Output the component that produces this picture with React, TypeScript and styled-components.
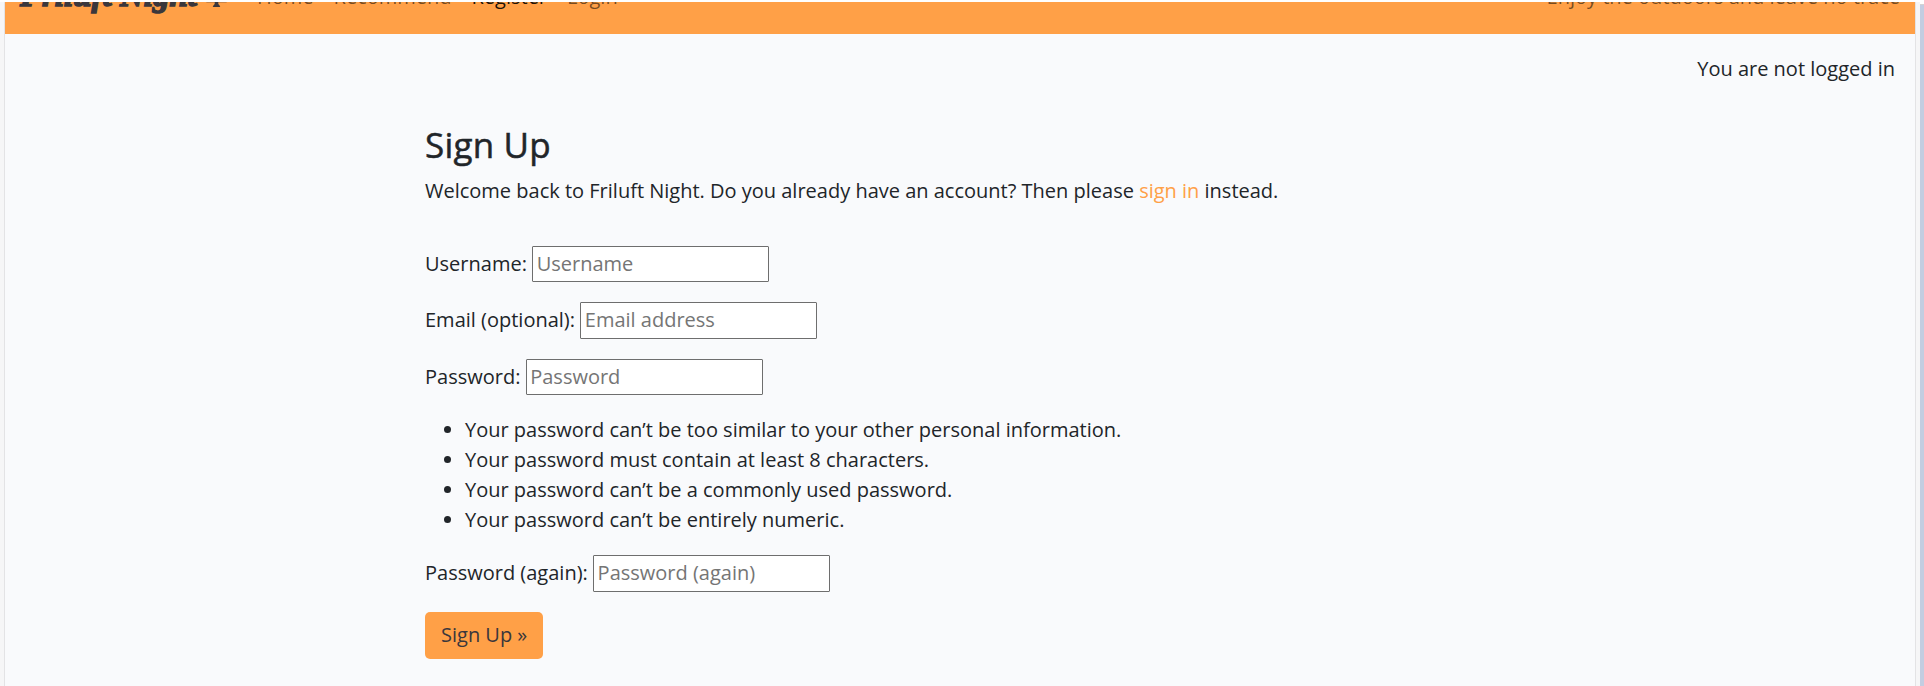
import React from "react";
import styled, { createGlobalStyle } from "styled-components";

const GlobalStyle = createGlobalStyle`
  *, *::before, *::after { box-sizing: border-box; }
  body {
    margin: 0;
    background: #fff;
    color: #212529;
    font: 400 20px/1.5 "Open Sans", sans-serif;
    overflow: hidden;
  }
`;

const Viewport = styled.div`
  height: 686px;
  display: flex;
  padding-top: 2px;
  overflow: hidden;
`;

const Gutter = styled.div<{ $side: "left" | "right" }>`
  flex: none;
  width: 5px;
  background: #f6f6f7;
  border-${(p) => (p.$side === "left" ? "right" : "left")}: 1px solid #e3e3e5;
`;

const ScrollBar = styled.div`
  flex: none;
  width: 4px;
  margin-top: 2px;
  background: #c3cde1;
  border-top: 1px solid #d3d3d3;
`;

const Page = styled.div`
  flex: 1;
  min-width: 0;
  background: #f9fafc;
`;

const Navbar = styled.header`
  height: 32px;
  background: #ffa047;
  display: flex;
  align-items: flex-end;
  overflow: hidden;
  padding: 0 15px 22px;
`;

const Brand = styled.a`
  display: flex;
  align-items: flex-end;
  width: 207px;
  margin: 0 30px 2.5px 0;
  color: #3a373c;
  font-family: "Liberation Serif", serif;
  font-size: 33px;
  line-height: 30px;
  font-weight: 700;
  font-style: italic;
  white-space: nowrap;
  -webkit-text-stroke: 1.6px #3a373c;
`;

const BrandIcon = styled.svg`
  flex: none;
  width: 21px;
  height: 26px;
  margin: 0 0 2.5px auto;
  fill: currentColor;
`;

const Nav = styled.nav`
  display: flex;
  gap: 20px;
`;

const NavItem = styled.a<{ $active?: boolean }>`
  line-height: 30px;
  color: ${(p) => (p.$active ? "rgba(0,0,0,.9)" : "rgba(0,0,0,.55)")};
`;

const Tagline = styled.span`
  margin-left: auto;
  line-height: 30px;
  color: rgba(0, 0, 0, 0.55);
`;

const Status = styled.p`
  margin: 20px 20px 0 0;
  text-align: right;
`;

const Main = styled.main`
  margin: 40px 420px 0;
`;

const Title = styled.h1`
  margin: 0 0 10px;
  font-size: 35px;
  font-weight: 500;
  line-height: 42px;
  letter-spacing: 0.2px;
  -webkit-text-stroke: 0.5px currentColor;
`;

const Intro = styled.p`
  margin: 0 0 39.6px;
`;

const Link = styled.a`
  color: #ffa047;
`;

const Row = styled.div`
  display: flex;
  align-items: center;
  gap: 5.3px;
  height: 36.5px;
  margin-bottom: 20px;
`;

const Input = styled.input`
  width: 237px;
  height: 36.5px;
  margin: 0;
  padding: 1px 3.5px 1.8px;
  border: 1px solid #6e6e6e;
  border-radius: 1px;
  background: #fff;
  font: inherit;
  &::placeholder { color: #757575; }
`;

const Rules = styled.ul`
  margin: 0 0 20px;
  padding-left: 40px;
`;

const Submit = styled.button`
  display: block;
  height: 47px;
  padding: 0 16px 1px;
  border: 0;
  border-radius: 5px;
  background: #ffa047;
  color: #3a373c;
  font: inherit;
`;

const rules = [
  "Your password can’t be too similar to your other personal information.",
  "Your password must contain at least 8 characters.",
  "Your password can’t be a commonly used password.",
  "Your password can’t be entirely numeric.",
];

type FieldProps = { id: string; label: string; placeholder: string; type?: string };

const Field = ({ id, label, placeholder, type = "text" }: FieldProps) => (
  <Row>
    <label htmlFor={id}>{label}</label>
    <Input id={id} type={type} placeholder={placeholder} />
  </Row>
);

export default function App() {
  return (
    <>
      <GlobalStyle />
      <Viewport>
        <Gutter $side="left" />
        <Page>
          <Navbar>
            <Brand>
              Friluft Night
              <BrandIcon viewBox="0 0 21 26" aria-hidden="true">
                <path d="M10.5 0 17 7h-3l5 6h-3l5 7.4q0 .9-1 .9h-7.7v1.6l1.9 2.3q0 .8-.7.8H7.5q-.7 0-.7-.8l1.9-2.3v-1.6H1q-1 0-1-.9L5 13H2l5-6H4Z" />
              </BrandIcon>
            </Brand>
            <Nav>
              <NavItem>Home</NavItem>
              <NavItem>Recommend</NavItem>
              <NavItem $active>Register</NavItem>
              <NavItem>Login</NavItem>
            </Nav>
            <Tagline>Enjoy the outdoors and leave no trace</Tagline>
          </Navbar>
          <Status>You are not logged in</Status>
          <Main>
            <Title>Sign Up</Title>
            <Intro>
              Welcome back to Friluft Night. Do you already have an account? Then please <Link>sign in</Link> instead.
            </Intro>
            <Field id="username" label="Username:" placeholder="Username" />
            <Field id="email" label="Email (optional):" placeholder="Email address" type="email" />
            <Field id="password1" label="Password:" placeholder="Password" type="password" />
            <Rules>
              {rules.map((rule) => (
                <li key={rule}>{rule}</li>
              ))}
            </Rules>
            <Field id="password2" label="Password (again):" placeholder="Password (again)" type="password" />
            <Submit type="button">Sign Up »</Submit>
          </Main>
        </Page>
        <Gutter $side="right" />
        <ScrollBar />
      </Viewport>
    </>
  );
}
